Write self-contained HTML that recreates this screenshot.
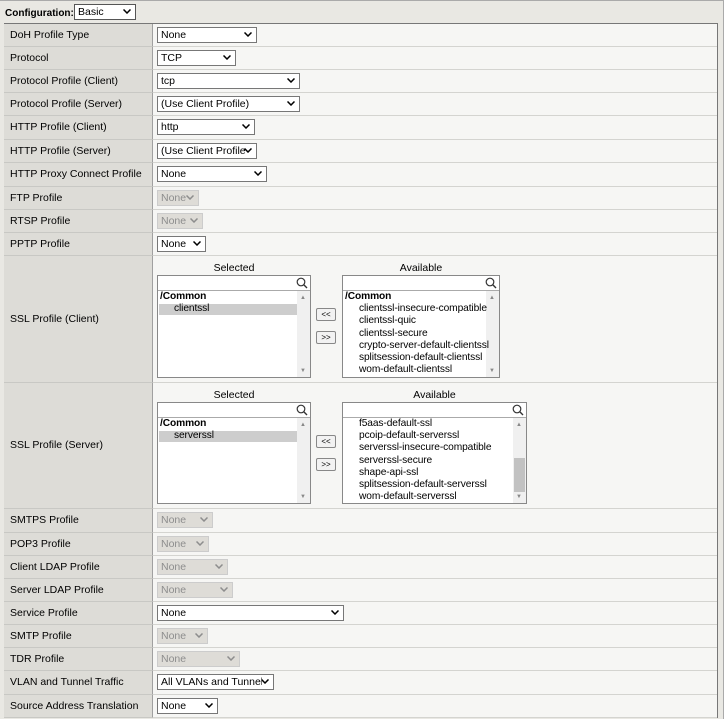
<!DOCTYPE html>
<html><head><style>
*{box-sizing:border-box;margin:0;padding:0}
body{width:724px;height:719px;background:#e9e8e3;font-family:"Liberation Sans",Arial,sans-serif;font-size:10.5px;color:#000;position:relative;overflow:hidden;border-top:1px solid #aaa;border-right:1px solid #aaa}
.a{position:absolute}
.tbl{position:absolute;left:4px;top:22px;width:714px;height:695px;border:1px solid #777;background:#f6f6f4}
.lab{position:absolute;left:4px;width:148px;background:#dddcd7;border-bottom:1px solid #c8c8c4}
.val{position:absolute;left:152px;width:565px;border-left:1px solid #a0a0a0;border-bottom:1px solid #d4d4d0}
.lt{position:absolute;left:10px;font-size:10.5px}
.sel{position:absolute;height:16px;background:#fff;border:1px solid #777;font-size:10.5px;line-height:14px;padding-left:3px;white-space:nowrap;overflow:hidden}
.sel span{display:block;overflow:hidden;margin-right:11px}
.sel.d{background:#dedcd7;border-color:#ccc;color:#8d8d8d}
.sel svg{position:absolute;right:4px;top:4px}
.box{position:absolute;background:#fff;border:1px solid #888;overflow:hidden}
.srch{position:absolute;left:0;right:0;top:0;height:15px;border-bottom:1px solid #aaa}
.sb{position:absolute;right:0;top:15px;bottom:0;width:13px;background:#f0f0f0}
.it{position:absolute;left:2px;font-size:10.2px;line-height:12px;white-space:nowrap;letter-spacing:-0.1px}
.btn{position:absolute;left:316px;width:20px;height:13px;border:1px solid #888;border-radius:2px;background:#f2f2f2;font-size:8px;line-height:11px;text-align:center}
</style></head><body>
<div class="a" style="left:5px;top:7px;font-size:10px;font-weight:bold">Configuration:</div>
<div class="sel" style="left:74px;top:3px;width:62px;border-color:#555"><span>Basic</span><svg width="8" height="5"><path d="M0.5 0.5L4 4L7.5 0.5" stroke="#000" stroke-width="1.5" fill="none"/></svg></div>
<div class="tbl"></div>
<div id="rows"></div>
<script>
var chev='<svg width="8" height="5"><path d="M0.5 0.5L4 4L7.5 0.5" stroke="currentColor" stroke-width="1.5" fill="none"/></svg>';
var R=[[22,23,"DoH Profile Type",100,"None"],[45,23,"Protocol",79,"TCP"],[68,23,"Protocol Profile (Client)",143,"tcp"],[91,23,"Protocol Profile (Server)",143,"(Use Client Profile)"],[114,24,"HTTP Profile (Client)",98,"http"],[138,23,"HTTP Profile (Server)",100,"(Use Client Profile)"],[161,24,"HTTP Proxy Connect Profile",110,"None"],[185,23,"FTP Profile",42,"None",1],[208,23,"RTSP Profile",46,"None",1],[231,23,"PPTP Profile",49,"None"],[254,127,"SSL Profile (Client)"],[381,126,"SSL Profile (Server)"],[507,24,"SMTPS Profile",56,"None",1],[531,23,"POP3 Profile",52,"None",1],[554,23,"Client LDAP Profile",71,"None",1],[577,23,"Server LDAP Profile",76,"None",1],[600,23,"Service Profile",187,"None"],[623,23,"SMTP Profile",51,"None",1],[646,23,"TDR Profile",83,"None",1],[669,24,"VLAN and Tunnel Traffic",117,"All VLANs and Tunnels"],[693,23,"Source Address Translation",61,"None"]];
var h='';
R.forEach(function(r){
 h+='<div class="lab" style="top:'+(r[0]+1)+'px;height:'+r[1]+'px"><div class="lt" style="left:6px;top:'+(Math.round(r[1]/2)-7)+'px">'+r[2]+'</div></div>';
 h+='<div class="val" style="top:'+(r[0]+1)+'px;height:'+r[1]+'px"></div>';
 if(r[3]) h+='<div class="sel'+(r[5]?' d':'')+'" style="left:157px;top:'+(r[0]+4)+'px;width:'+r[3]+'px"><span>'+r[4]+'</span>'+chev+'</div>';
});
var mag='<svg class="a" style="right:2px;top:1px" width="12" height="12"><circle cx="5" cy="5" r="3.8" stroke="#333" stroke-width="1.2" fill="none"/><path d="M7.8 7.8L11 11" stroke="#333" stroke-width="1.4"/></svg>';
function box(x,y,w,hh,items,title,thumb){
 var s='<div class="a" style="left:'+x+'px;width:'+w+'px;top:'+(y-13)+'px;text-align:center">'+title+'</div>';
 s+='<div class="box" style="left:'+x+'px;top:'+y+'px;width:'+w+'px;height:'+hh+'px"><div class="srch">'+mag+'</div>';
 s+='<div class="sb"><div style="position:absolute;left:3px;top:4px;font-size:6px;color:#888">&#9650;</div><div style="position:absolute;left:3px;bottom:3px;font-size:6px;color:#888">&#9660;</div>'+(thumb?'<div style="position:absolute;left:1px;right:1px;top:'+thumb[0]+'px;height:'+thumb[1]+'px;background:#c2c2c2"></div>':'')+'</div>';
 items.forEach(function(it,i){
  var t=15+i*12.2;
  if(it[1]==2) s+='<div class="a" style="left:1px;width:138px;top:'+(t+1)+'px;height:11px;background:#cdcdcd"></div>';
  s+='<div class="it" style="top:'+t+'px;left:'+(it[1]?16:2)+'px">'+it[0]+'</div>';
 });
 return s+'</div>';
}
h+=box(157,274,154,103,[["/Common",0],["clientssl",2]],"Selected");
h+=box(342,274,158,103,[["/Common",0],["clientssl-insecure-compatible",1],["clientssl-quic",1],["clientssl-secure",1],["crypto-server-default-clientssl",1],["splitsession-default-clientssl",1],["wom-default-clientssl",1]],"Available");
h+=box(157,401,154,102,[["/Common",0],["serverssl",2]],"Selected");
h+=box(342,401,185,102,[["f5aas-default-ssl",1],["pcoip-default-serverssl",1],["serverssl-insecure-compatible",1],["serverssl-secure",1],["shape-api-ssl",1],["splitsession-default-serverssl",1],["wom-default-serverssl",1]],"Available",[40,34]);
h+='<div class="btn" style="top:307px">&lt;&lt;</div><div class="btn" style="top:330px">&gt;&gt;</div>';
h+='<div class="btn" style="top:434px">&lt;&lt;</div><div class="btn" style="top:457px">&gt;&gt;</div>';
document.getElementById('rows').innerHTML=h;
document.querySelectorAll('.it').forEach(function(e){if(e.textContent=='/Common')e.style.fontWeight='bold';});
</script>
</body></html>
